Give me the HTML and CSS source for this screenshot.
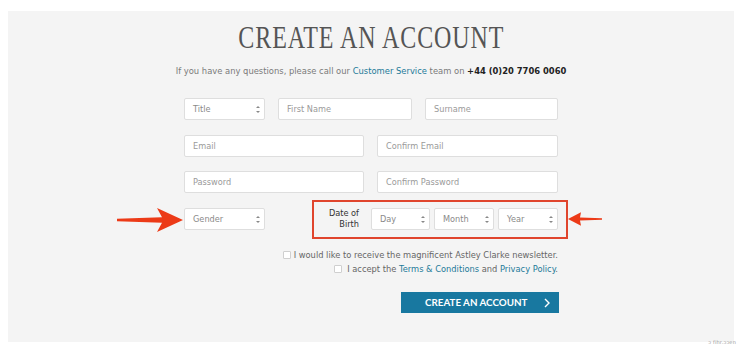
FILE: index.html
```html
<!DOCTYPE html>
<html lang="en">
<head>
<meta charset="utf-8">
<title>Create an account</title>
<link rel="stylesheet" href="styles.css">
</head>
<body>
<div class="panel">
  <h1 class="title"><span>CREATE AN ACCOUNT</span></h1>
  <p class="intro">If you have any questions, please call our <a href="#">Customer Service</a> team on <b>+44 (0)20 7706 0060</b></p>
  <form class="form">
    <div class="row row-name">
      <div class="select">Title<i class="updown"></i></div>
      <div class="input">First Name</div>
      <div class="input">Surname</div>
    </div>
    <div class="row row-two">
      <div class="input">Email</div>
      <div class="input">Confirm Email</div>
    </div>
    <div class="row row-two">
      <div class="input">Password</div>
      <div class="input">Confirm Password</div>
    </div>
    <div class="row row-dob">
      <div class="gender-wrap">
        <svg class="arrow arrow-left" viewBox="0 0 66 26" width="66" height="26"><path d="M0 11.8 L45 10.2 L40 1 L66 13 L40 25 L45 15.8 L0 14.2 Z"/></svg>
        <div class="select select-gender">Gender<i class="updown"></i></div>
      </div>
      <div class="dob">
        <span class="mark"></span>
        <svg class="arrow arrow-right" viewBox="0 0 34 14" width="34" height="14"><path d="M34 6.3 L12 5.4 L13 0.3 L0 7 L13 13.7 L12 8.6 L34 7.7 Z"/></svg>
        <span class="dob-label">Date of<br>Birth</span>
        <div class="select select-day">Day<i class="updown"></i></div>
        <div class="select select-month">Month<i class="updown"></i></div>
        <div class="select select-year">Year<i class="updown"></i></div>
      </div>
    </div>
    <div class="checks">
      <label class="check"><span class="box"></span>I would like to receive the magnificent Astley Clarke newsletter.</label>
      <label class="check check-terms"><span class="box"></span>I accept the <a href="#">Terms &amp; Conditions</a> and <a href="#">Privacy Policy</a>.</label>
    </div>
    <div class="actions">
      <button type="button" class="btn">CREATE AN ACCOUNT<svg class="chev" viewBox="0 0 6 10" width="6" height="10"><polyline points="1,1 5,5 1,9" fill="none" stroke="#fff" stroke-width="1.4"/></svg></button>
    </div>
  </form>
</div>
<div class="credit">ɔ fihr.ɔɔen</div>
</body>
</html>
```
FILE: styles.css
```css
html, body {
  margin: 0;
  padding: 0;
  background: #ffffff;
}
body {
  font-family: "DejaVu Sans", Verdana, sans-serif;
  position: relative;
  width: 750px;
  height: 346px;
  overflow: hidden;
}
.panel {
  margin: 11px 0 0 8px;
  width: 726px;
  height: 331px;
  background: #f4f4f4;
  box-sizing: border-box;
  padding-top: 8px;
}
.title {
  margin: 0;
  text-align: center;
  font-family: "Liberation Serif", "Times New Roman", serif;
  font-weight: normal;
  font-size: 32px;
  line-height: 36px;
  color: #555555;
  letter-spacing: 1.2px;
}
.title span {
  display: inline-block;
  transform: scaleX(0.75);
}
.intro {
  margin: 10px 0 0;
  text-align: center;
  font-size: 8.4px;
  line-height: 12px;
  color: #7a7a7a;
}
.intro a {
  color: #1d7a99;
  text-decoration: none;
}
.intro b {
  color: #222;
  font-weight: bold;
}
.form {
  width: 374px;
  margin: 21px auto 0;
}
.row {
  display: grid;
  gap: 13px;
  height: 22px;
  margin-bottom: 14.5px;
}
.row-name {
  grid-template-columns: 81px 134px 1fr;
  column-gap: 13px;
}
.row-two {
  grid-template-columns: 180px 1fr;
}
.input, .select {
  box-sizing: border-box;
  height: 22px;
  background: #fff;
  border: 1px solid #dedede;
  border-radius: 2px;
  font-size: 8.2px;
  line-height: 20px;
  color: #9a9a9a;
  padding-left: 8px;
  position: relative;
}
.select {
  color: #8a8a8a;
}
.updown {
  position: absolute;
  right: 6px;
  top: 7px;
  width: 0;
  height: 7px;
}
.updown::before, .updown::after {
  content: "";
  position: absolute;
  left: -2px;
  border-left: 2px solid transparent;
  border-right: 2px solid transparent;
}
.updown::before {
  top: 0;
  border-bottom: 2.5px solid #888;
}
.updown::after {
  bottom: 0;
  border-top: 2.5px solid #888;
}
.row-dob {
  display: flex;
  justify-content: space-between;
  align-items: center;
  margin-bottom: 0;
}
.gender-wrap {
  position: relative;
  width: 81px;
}
.select-gender {
  width: 81px;
}
.arrow {
  position: absolute;
  fill: #ec3a17;
}
.arrow-left {
  left: -67px;
  top: -1px;
}
.arrow-right {
  right: -44px;
  top: 4px;
}
.dob {
  position: relative;
  display: flex;
  align-items: center;
  gap: 4px;
}
.mark {
  position: absolute;
  left: -1px;
  right: -10px;
  top: -8px;
  bottom: -9px;
  border: 2px solid #e0452d;
  pointer-events: none;
}
.dob-label {
  font-size: 8.2px;
  line-height: 11px;
  color: #333;
  text-align: right;
  width: 46px;
  margin-right: 8px;
}
.select-day { width: 59px; }
.select-month { width: 60px; }
.select-year { width: 60px; }
.checks {
  margin-top: 20px;
  display: flex;
  flex-direction: column;
  align-items: flex-end;
  gap: 3px;
}
.check {
  display: block;
  font-size: 8.3px;
  line-height: 11px;
  color: #666;
  white-space: nowrap;
}
.check a {
  color: #1d7a99;
  text-decoration: none;
}
.box {
  display: inline-block;
  vertical-align: -1px;
  box-sizing: border-box;
  width: 8px;
  height: 8px;
  border: 1px solid #cfcfcf;
  background: #fff;
  border-radius: 1px;
  margin-right: 3px;
}
.check-terms .box {
  margin-right: 5px;
}
.actions {
  display: flex;
  justify-content: flex-end;
  margin-top: 17px;
}
.btn {
  width: 158px;
  height: 21px;
  margin-right: -1px;
  border: 0;
  background: #1878a0;
  color: #fff;
  font-family: Lato, "Open Sans", sans-serif;
  font-weight: 700;
  font-size: 9.8px;
  letter-spacing: 0;
  padding: 0 0 0 24px;
  display: flex;
  align-items: center;
  justify-content: flex-start;
  position: relative;
}
.chev {
  position: absolute;
  right: 9px;
  top: 6px;
}
.credit {
  position: absolute;
  right: 14px;
  bottom: 1px;
  font-size: 5px;
  color: #999;
  letter-spacing: 0.2px;
}
```
